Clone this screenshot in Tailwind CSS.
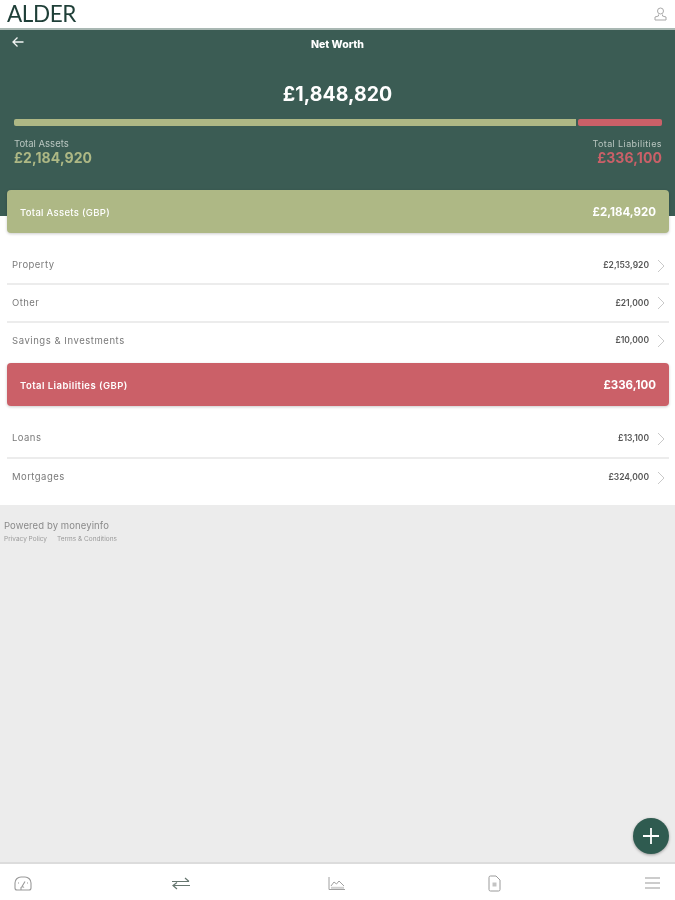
<!DOCTYPE html>
<html lang="en">
<head>
<meta charset="utf-8">
<script src="https://cdn.jsdelivr.net/npm/@tailwindcss/browser@4"></script>
<title>Net Worth</title>
</head>
<body class="m-0 font-['Inter','Liberation_Sans',sans-serif]">
<div class="w-[675px] h-[900px] flex flex-col bg-[#ececec] overflow-hidden relative blur-[0.3px]">
  <header class="h-[30px] shrink-0 bg-white border-b-2 border-[#a9b8b3] flex items-center justify-between pl-[7px] pr-[8px]">
    <span class="font-['Lato','Liberation_Sans',sans-serif] text-[22.500px] font-normal leading-[30px] text-[#1f3f38] tracking-[-0.4px]">ALDER</span>
    <svg width="13" height="14" viewBox="0 0 13 14" fill="none" stroke="#a8a8a8" stroke-width="1"><circle cx="6.500" cy="4" r="3"/><path d="M4.500 7.500v1.500L1 10v3h11v-3L8.500 9V7.500"/></svg>
  </header>

  <section class="h-[186px] shrink-0 bg-[#3b5c54] px-[14px] pt-[6px] relative">
    <div class="relative h-[16px] flex justify-center items-center">
      <svg class="absolute left-[-2px] top-0" width="12" height="12" viewBox="0 0 12 12" fill="none" stroke="#f2f5f3" stroke-width="1.300"><path d="M11.500 6H1M5.500 1.500 1 6l4.500 4.500"/></svg>
      <span class="text-[10.500px] font-extrabold text-white translate-y-[1px]">Net Worth</span>
    </div>
    <div class="mt-[28px] text-center text-[19.500px] leading-[28px] font-bold text-white tracking-[0.05px]">£1,848,820</div>
    <div class="mt-[11px] flex gap-[2px] h-[7px]">
      <div class="w-[562px] bg-[#aeb885] rounded-l-[2px]"></div>
      <div class="flex-1 mr-[-1px] bg-[#cb6068] rounded-[2px]"></div>
    </div>
    <div class="mt-[12px] flex justify-between">
      <div>
        <div class="text-[9.500px] leading-[12px] text-[#b9c6c0]">Total Assets</div>
        <div class="text-[14px] leading-[16px] font-bold text-[#aeb885] tracking-[0.1px]">£2,184,920</div>
      </div>
      <div class="text-right mr-[-1px]">
        <div class="text-[9px] leading-[12px] text-[#b9c6c0] tracking-[0.4px]">Total Liabilities</div>
        <div class="text-[14px] leading-[16px] font-bold text-[#cb6068] tracking-[0.1px]">£336,100</div>
      </div>
    </div>
  </section>

  <main class="bg-white h-[289px] shrink-0 pl-[7px] pr-[6px] relative">
    <div class="-mt-[26px] h-[43px] rounded-[4px] bg-[#aeb885] shadow-[0_1px_3px_rgba(0,0,0,0.2)] pt-[3px] px-[13px] flex items-center justify-between text-white relative">
      <span class="text-[9.500px] font-medium tracking-[0.3px]">Total Assets (GBP)</span>
      <span class="text-[11.500px] font-bold">£2,184,920</span>
    </div>
    <div class="mt-[13px]">
      <div class="h-[39px] pt-[2px] border-b-2 border-[#ececec] flex items-center justify-between pl-[5px] pr-[4px]">
        <span class="text-[9.500px] text-[#7a7a7a] tracking-[0.45px]">Property</span>
        <span class="flex items-center gap-[8px]"><span class="text-[8.500px] font-semibold text-[#555]">£2,153,920</span><svg width="8" height="14" viewBox="0 0 8 14" fill="none" stroke="#c9c9c9" stroke-width="1"><path d="M1 1l6 6-6 6"/></svg></span>
      </div>
      <div class="h-[38px] border-b-2 border-[#ececec] flex items-center justify-between pl-[5px] pr-[4px]">
        <span class="text-[9.500px] text-[#7a7a7a] tracking-[0.45px]">Other</span>
        <span class="flex items-center gap-[8px]"><span class="text-[8.500px] font-semibold text-[#555]">£21,000</span><svg width="8" height="14" viewBox="0 0 8 14" fill="none" stroke="#c9c9c9" stroke-width="1"><path d="M1 1l6 6-6 6"/></svg></span>
      </div>
      <div class="h-[35px] flex items-center justify-between pl-[5px] pr-[4px]">
        <span class="pt-[1px] text-[9.500px] text-[#7a7a7a] tracking-[0.55px]">Savings &amp; Investments</span>
        <span class="flex items-center gap-[8px]"><span class="text-[8.500px] font-semibold text-[#555]">£10,000</span><svg width="8" height="14" viewBox="0 0 8 14" fill="none" stroke="#c9c9c9" stroke-width="1"><path d="M1 1l6 6-6 6"/></svg></span>
      </div>
    </div>
    <div class="mt-[5px] h-[43px] rounded-[4px] bg-[#cb6068] shadow-[0_1px_3px_rgba(0,0,0,0.2)] pt-[3px] px-[13px] flex items-center justify-between text-white">
      <span class="text-[9.500px] font-semibold tracking-[0.45px]">Total Liabilities (GBP)</span>
      <span class="text-[11.500px] font-bold">£336,100</span>
    </div>
    <div class="mt-[12px]">
      <div class="h-[41px] pt-[2px] border-b-2 border-[#ececec] flex items-center justify-between pl-[5px] pr-[4px]">
        <span class="text-[9.500px] text-[#7a7a7a] tracking-[0.45px]">Loans</span>
        <span class="flex items-center gap-[8px]"><span class="text-[8.500px] font-semibold text-[#555]">£13,100</span><svg width="8" height="14" viewBox="0 0 8 14" fill="none" stroke="#c9c9c9" stroke-width="1"><path d="M1 1l6 6-6 6"/></svg></span>
      </div>
      <div class="h-[35px] pt-[2px] flex items-center justify-between pl-[5px] pr-[4px]">
        <span class="text-[9.500px] text-[#7a7a7a] tracking-[0.45px]">Mortgages</span>
        <span class="flex items-center gap-[8px]"><span class="text-[8.500px] font-semibold text-[#555]">£324,000</span><svg width="8" height="14" viewBox="0 0 8 14" fill="none" stroke="#c9c9c9" stroke-width="1"><path d="M1 1l6 6-6 6"/></svg></span>
      </div>
    </div>
  </main>

  <footer class="flex-1 px-[4px] pt-[15px]">
    <div class="text-[9.500px] leading-[12px] text-[#8a8a8a] tracking-[0.1px]">Powered by moneyinfo</div>
    <div class="mt-[3px] flex gap-[10px] text-[6.500px] leading-[9px] text-[#9a9a9a]"><span>Privacy Policy</span><span>Terms &amp; Conditions</span></div>
  </footer>

  <button class="absolute right-[6px] bottom-[46px] w-[36px] h-[36px] rounded-full bg-[#2f5b50] shadow-[0_1px_3px_rgba(0,0,0,0.35)] flex items-center justify-center">
    <svg width="18" height="18" viewBox="0 0 18 18" stroke="#fff" stroke-width="1.800"><path d="M9 1v16M1 9h16"/></svg>
  </button>

  <nav class="h-[38px] shrink-0 bg-white border-t-2 border-[#dcdcdc] flex items-center justify-between pl-[14px] pr-[14px] pt-[2px]">
    <span class="w-[18px] flex justify-center"><svg width="18" height="15" viewBox="0 0 18 15" fill="none" stroke="#9a9a9a" stroke-width="1.100"><path d="M3 14h12a2 2 0 0 0 2-2V7a6 6 0 0 0-6-6H7a6 6 0 0 0-6 6v5a2 2 0 0 0 2 2z"/><path d="M8 10.500l3-5M7 14v-2.500a2 2 0 0 1 3 0M4 7h1M13 7h1"/></svg></span>
    <span class="w-[18px] flex justify-center"><svg width="18" height="13" viewBox="0 0 18 13" fill="none" stroke="#66766f" stroke-width="1.200"><path d="M0 4.500h17M13 1l4 3.500M18 8.500H1M5 5.500 1 8.500l4 3.500"/></svg></span>
    <span class="w-[18px] flex justify-center -ml-[2px]"><svg width="17" height="13" viewBox="0 0 17 13" fill="none" stroke="#a0a0a0" stroke-width="1"><path d="M1 0v12.500h16"/><path d="M3 9l3-4 2.500 2 2.500-3 5 5"/><path d="M3 10.800h13" stroke="#cfcfcf" stroke-width="2"/></svg></span>
    <span class="w-[18px] flex justify-center"><svg width="13" height="17" viewBox="0 0 13 17" fill="none" stroke="#9a9a9a" stroke-width="1"><path d="M1 2.500A1.500 1.500 0 0 1 2.500 1H8l4 4v9.500a1.500 1.500 0 0 1-1.500 1.500h-8A1.500 1.500 0 0 1 1 14.500z"/><path d="M4.500 7.500h4v4h-4z" fill="#c4c4c4" stroke="none"/></svg></span>
    <span class="w-[18px] flex justify-center"><svg width="15" height="12" viewBox="0 0 15 12" fill="none" stroke="#9a9a9a" stroke-width="1.200"><path d="M0 1h15M0 6h15M0 11h15"/></svg></span>
  </nav>
</div>
</body>
</html>
